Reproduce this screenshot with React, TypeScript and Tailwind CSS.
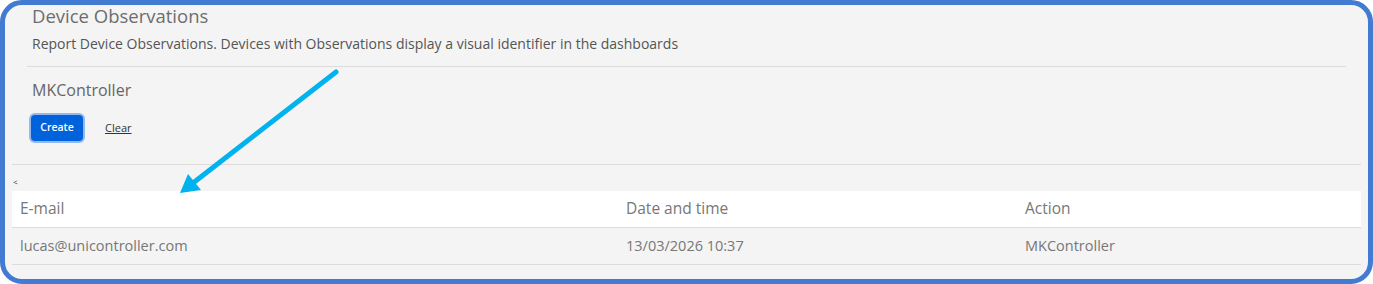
import React from "react";

const rows = [
  { email: "lucas@unicontroller.com", date: "13/03/2026 10:37", action: "MKController" },
];

function Arrow() {
  // annotation arrow drawn over the page
  return (
    <svg
      className="absolute inset-0 pointer-events-none"
      width="1373"
      height="284"
      viewBox="0 0 1373 284"
    >
      <line x1="336" y1="72" x2="193" y2="183" stroke="#00b2ee" strokeWidth="5" strokeLinecap="round" />
      <polygon points="180,193 188,174 201,190" fill="#00b2ee" />
    </svg>
  );
}

export default function App() {
  return (
    <div className="relative w-[1373px] h-[284px] bg-white" style={{ fontFamily: '"Open Sans", sans-serif' }}>
      <div className="h-full border-[5px] border-[#417bd2] rounded-[22px] bg-[#f4f4f4] overflow-hidden">
        <div className="mx-[22px]">
          <h1 className="pl-[5px] text-[18.5px] leading-[22px] text-[#6d6d6d]">Device Observations</h1>
          <p className="pl-[5px] mt-[8px] text-[14px] leading-[18px] text-[#555]">
            Report Device Observations. Devices with Observations display a visual identifier in the dashboards
          </p>
          <div className="mt-[13px] border-t border-[#dcdcdc]" />
          <h2 className="pl-[5px] mt-[13px] text-[16px] leading-[20px] text-[#666]">MKController</h2>
          <div className="pl-[4px] mt-[15px] flex items-center gap-[22px]">
            <button className="h-[26px] w-[52px] rounded-[4px] bg-[#0063dc] text-white text-[10.5px] font-semibold ring-2 ring-[#93b9ee]">
              Create
            </button>
            <button className="text-[11px] text-[#333] underline">Clear</button>
          </div>
        </div>
        <div className="mx-[7px]">
          <div className="mt-[23px] border-t border-[#dcdcdc]" />
          <div className="mt-[12px] text-[8px] leading-[10px] text-[#333] pl-[1px]">&lt;</div>
          <table className="mt-[4px] w-full border-collapse text-[#777]">
            <thead>
              <tr className="bg-white h-[36px] border-b border-[#dcdcdc] text-[15.5px]">
                <th className="w-[606px] text-left font-normal pl-[8px]">E-mail</th>
                <th className="w-[399px] text-left font-normal pl-[8px]">Date and time</th>
                <th className="text-left font-normal pl-[8px]">Action</th>
              </tr>
            </thead>
            <tbody>
              {rows.map((r) => (
                <tr key={r.email} className="h-[37px] border-b border-[#dcdcdc] text-[14.5px]">
                  <td className="pl-[8px]">{r.email}</td>
                  <td className="pl-[8px]">{r.date}</td>
                  <td className="pl-[8px]">{r.action}</td>
                </tr>
              ))}
            </tbody>
          </table>
        </div>
      </div>
      <Arrow />
    </div>
  );
}
